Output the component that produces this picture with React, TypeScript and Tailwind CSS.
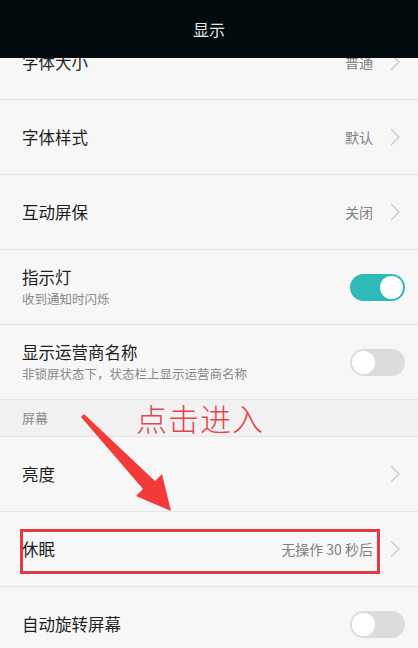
import React from "react";

const font = { fontFamily: '"Noto Sans CJK SC", "Noto Sans", sans-serif' };

function Chevron() {
  return (
    <svg width="12" height="20" viewBox="0 0 12 20" className="shrink-0">
      <polyline points="2,2 10,10 2,18" fill="none" stroke="#c9c9c9" strokeWidth="1.3" />
    </svg>
  );
}

function Toggle({ on }: { on: boolean }) {
  return (
    <div
      className={`w-[55px] h-[27px] rounded-full flex items-center px-[2px] shrink-0 ${
        on ? "bg-[#2ebab6] justify-end" : "bg-[#dcdcdc] justify-start"
      }`}
    >
      <div className="w-[23px] h-[23px] rounded-full bg-white" />
    </div>
  );
}

function NavRow({ title, value }: { title: string; value?: string }) {
  return (
    <div className="h-[75px] flex items-center pl-[22px] pr-[17px] border-b border-[#e6e6e6]">
      <div className="flex-1 text-[16.5px] text-[#1e1e1e]">{title}</div>
      {value && <div className="text-[14px] text-[#808080] mr-[16px]">{value}</div>}
      <Chevron />
    </div>
  );
}

function SwitchRow({ title, sub, on }: { title: string; sub?: string; on: boolean }) {
  return (
    <div className="h-[75px] flex items-center pl-[22px] pr-[13px] border-b border-[#e6e6e6]">
      <div className="flex-1 flex flex-col">
        <div className="text-[16.5px] text-[#1e1e1e] leading-[24px]">{title}</div>
        {sub && <div className="text-[12.5px] text-[#888] leading-[20px]">{sub}</div>}
      </div>
      <Toggle on={on} />
    </div>
  );
}

export default function App() {
  return (
    <div className="relative w-[418px] h-[648px] overflow-hidden bg-[#f7f7f7]" style={font}>
      <div className="relative z-10 h-[58px] bg-[#020b0e] flex items-center justify-center">
        <span className="text-[16px] text-[#e6e6e6]">显示</span>
      </div>

      <div className="-mt-[33px]">
        <NavRow title="字体大小" value="普通" />
        <NavRow title="字体样式" value="默认" />
        <NavRow title="互动屏保" value="关闭" />
        <SwitchRow title="指示灯" sub="收到通知时闪烁" on />
        <SwitchRow title="显示运营商名称" sub="非锁屏状态下，状态栏上显示运营商名称" on={false} />
        <div className="h-[37px] flex items-center pl-[22px] bg-[#f1f1f1] border-b border-[#e6e6e6]">
          <span className="text-[13px] text-[#8a8a8a]">屏幕</span>
        </div>
        <NavRow title="亮度" />
        <NavRow title="休眠" value="无操作 30 秒后" />
        <SwitchRow title="自动旋转屏幕" on={false} />
      </div>

      {/* annotation */}
      <div className="absolute left-[20px] top-[529px] w-[360px] h-[45px] border-[3px] border-[#e33b3f]" />
      <div className="absolute left-[136px] top-[398px] text-[31px] leading-[40px] text-[#e4474b] font-light tracking-[1px]">
        点击进入
      </div>
      <svg className="absolute left-0 top-0" width="418" height="648" viewBox="0 0 418 648">
        <polygon points="81,417 84,414 155,481 162,474 171,511 136,496 143,489" fill="#f23a3a" />
      </svg>
    </div>
  );
}
